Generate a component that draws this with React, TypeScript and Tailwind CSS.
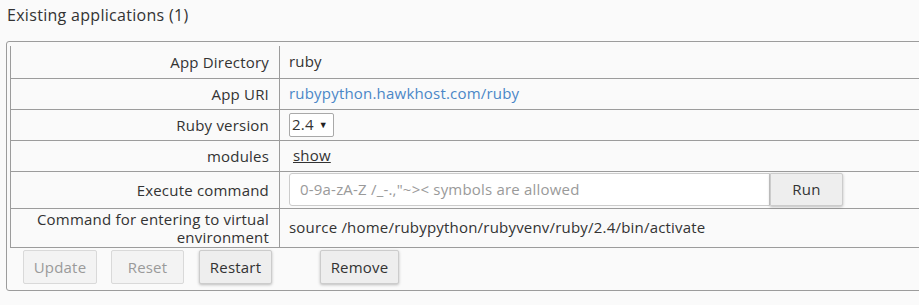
import React from "react";

const rows: { label: string; h: string }[] = [
  { label: "App Directory", h: "h-[33px]" },
  { label: "App URI", h: "h-[31px]" },
  { label: "Ruby version", h: "h-[31px]" },
  { label: "modules", h: "h-[31px]" },
  { label: "Execute command", h: "h-[37px]" },
  { label: "Command for entering to virtual environment", h: "h-[39px]" },
];

function Cell({ i }: { i: number }) {
  if (i === 0) return <span>ruby</span>;
  if (i === 1)
    return <a className="text-[#4a87c7]">rubypython.hawkhost.com/ruby</a>;
  if (i === 2)
    return (
      <div className="flex items-center h-[24px] w-[45px] border border-[#a9a9a9] rounded-[2px] bg-white pl-[2px] gap-[5px]">
        <span>2.4</span>
        <span className="text-[9px] text-[#222]">▼</span>
      </div>
    );
  if (i === 3) return <a className="underline ml-[4px]">show</a>;
  if (i === 4)
    return (
      <div className="flex items-center">
        <div className="w-[481px] h-[33px] border border-[#ccc] rounded-l-[3px] bg-white flex items-center pl-[10px] text-[#9a9a9a]">
          0-9a-zA-Z /_-.,"~&gt;&lt; symbols are allowed
        </div>
        <button className="w-[73px] h-[33px] bg-[#eeeeee] border border-[#ccc] rounded-r-[2px] shadow-[0_1px_3px_rgba(0,0,0,0.25)] text-[#333]">
          Run
        </button>
      </div>
    );
  return <span>source /home/rubypython/rubyvenv/ruby/2.4/bin/activate</span>;
}

export default function App() {
  return (
    <div className="w-[919px] h-[305px] overflow-hidden bg-[#fafafa] text-[#333] text-[15px] tracking-[0.2px] font-['Open_Sans',sans-serif]">
      <div className="pl-[7px] pt-[4px] text-[16px] tracking-[0.3px] leading-[22px]">Existing applications (1)</div>
      <div className="mt-[15px] ml-[6px] w-[960px] border border-[#9c9c9c] rounded-[3px] pl-[3px] pt-[4px] pb-[5px]">
        <div className="border-l border-[#9c9c9c]">
          {rows.map((r, i) => (
            <div key={r.label} className={`flex ${r.h} border-b border-[#9c9c9c]`}>
              <div className="w-[269px] shrink-0 border-r border-[#9c9c9c] flex items-center justify-end text-right pr-[10px] leading-[18px] pb-[1px]">
                {r.label}
              </div>
              <div className="flex items-center pl-[9px] pb-[1px]">
                <Cell i={i} />
              </div>
            </div>
          ))}
        </div>
        <div className="flex items-center pl-[13px] pt-[1px] h-[37px]">
          <button className="w-[74px] h-[34px] bg-[#f3f3f3] border border-[#d9d9d9] rounded-[2px] text-[#9a9a9a]">Update</button>
          <button className="ml-[14px] w-[73px] h-[34px] bg-[#f3f3f3] border border-[#d9d9d9] rounded-[2px] text-[#9a9a9a]">Reset</button>
          <button className="ml-[15px] w-[73px] h-[34px] bg-[#eeeeee] border border-[#ccc] rounded-[2px] shadow-[0_1px_3px_rgba(0,0,0,0.25)]">Restart</button>
          <button className="ml-[48px] w-[79px] h-[34px] bg-[#eeeeee] border border-[#ccc] rounded-[2px] shadow-[0_1px_3px_rgba(0,0,0,0.25)]">Remove</button>
        </div>
      </div>
    </div>
  );
}
